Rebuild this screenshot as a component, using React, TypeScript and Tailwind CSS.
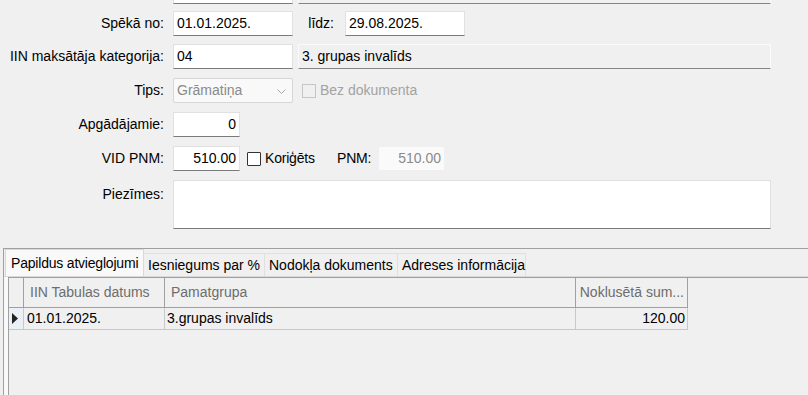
import React from "react";

function TextBox({ className = "", children, right = false }: { className?: string; children?: React.ReactNode; right?: boolean }) {
  return (
    <div
      className={`h-full bg-white border border-[#e1e1e1] border-b-[#7a7a7a] flex items-center px-[3px] ${right ? "justify-end" : ""} ${className}`}
    >
      {children}
    </div>
  );
}

function Label({ children, className = "" }: { children: React.ReactNode; className?: string }) {
  return <div className={`w-[164px] shrink-0 text-right whitespace-nowrap ${className}`}>{children}</div>;
}

export default function App() {
  return (
    <div className="w-[808px] h-[395px] overflow-hidden bg-[#f0f0f0] font-['Liberation_Sans',Arial,sans-serif] text-[14px] text-black flex flex-col">
      {/* row 0 (mostly scrolled out) */}
      <div className="flex h-[25px] -mt-[21px] shrink-0">
        <div className="w-[173px] shrink-0" />
        <TextBox className="w-[120px]" />
        <div className="w-[5px]" />
        <div className="w-[473px] h-full bg-[#f0f0f0] border border-[#fbfbfb] border-b-[#858585]" />
      </div>

      {/* Spēkā no */}
      <div className="flex h-[25px] mt-[7px] items-center shrink-0">
        <Label>Spēkā no:</Label>
        <div className="w-[9px]" />
        <TextBox className="w-[120px]">01.01.2025.</TextBox>
        <div className="w-[52px] text-right pr-[11px]">līdz:</div>
        <TextBox className="w-[120px]">29.08.2025.</TextBox>
      </div>

      {/* IIN */}
      <div className="flex h-[25px] mt-[8px] items-center shrink-0">
        <Label>IIN maksātāja kategorija:</Label>
        <div className="w-[9px]" />
        <TextBox className="w-[120px]">04</TextBox>
        <div className="w-[5px]" />
        <div className="w-[473px] h-full bg-[#f0f0f0] border border-[#fbfbfb] border-b-[#858585] flex items-center px-[3px]">
          3. grupas invalīds
        </div>
      </div>

      {/* Tips */}
      <div className="flex h-[25px] mt-[9px] items-center shrink-0">
        <Label>Tips:</Label>
        <div className="w-[9px]" />
        <div className="w-[120px] h-full bg-[#f9f9f9] border border-[#d6d6d6] rounded-[2px] flex items-center pl-[3px] pr-[6px] justify-between text-[#8a8a8a]">
          <span>Grāmatiņa</span>
          <svg width="9" height="6" viewBox="0 0 9 6" className="mt-[2px]">
            <path d="M0.5 0.5 L4.5 4.5 L8.5 0.5" fill="none" stroke="#a8a8a8" strokeWidth="1" />
          </svg>
        </div>
        <div className="w-[9px]" />
        <div className="w-[14px] h-[14px] border border-[#c6c6c6] bg-[#f0f0f0] shrink-0" />
        <div className="ml-[4px] text-[#a3a3a3]">Bez dokumenta</div>
      </div>

      {/* Apgādājamie */}
      <div className="flex h-[25px] mt-[9px] items-center shrink-0">
        <Label>Apgādājamie:</Label>
        <div className="w-[9px]" />
        <TextBox className="w-[67px]" right>0</TextBox>
      </div>

      {/* VID PNM */}
      <div className="flex h-[25px] mt-[9px] items-center shrink-0">
        <Label>VID PNM:</Label>
        <div className="w-[9px]" />
        <TextBox className="w-[67px]" right>510.00</TextBox>
        <div className="w-[7px]" />
        <div className="w-[14px] h-[14px] border border-[#333333] bg-white rounded-[1px] shrink-0" />
        <div className="ml-[4px] w-[49px] whitespace-nowrap tracking-[-0.2px]">Koriģēts</div>
        <div className="ml-[23px] w-[31px] whitespace-nowrap tracking-[-0.2px]">PNM:</div>
        <div className="ml-[10px] w-[67px] h-full bg-[#fafafa] border border-[#efefef] flex items-center justify-end px-[3px] text-[#8a8a8a]">
          510.00
        </div>
      </div>

      {/* Piezīmes */}
      <div className="flex h-[49px] mt-[9px] shrink-0">
        <Label className="pt-[4px]">Piezīmes:</Label>
        <div className="w-[9px]" />
        <div className="w-[598px] h-full bg-white border border-[#e1e1e1] border-b-[#7a7a7a]" />
      </div>

      {/* Tab area */}
      <div className="mt-[19px] ml-[3px] flex-1 border-t border-l border-[#a0a0a0] flex flex-col">
        <div className="flex items-end h-[27px] pl-[1px] shrink-0">
          <div className="w-[139px] h-[27px] bg-[#f9f9f9] border border-b-0 border-[#d9d9d9] flex items-center pl-[5px] whitespace-nowrap tracking-[-0.2px]">
            Papildus atvieglojumi
          </div>
          <div className="w-[121px] h-[23px] bg-[#f0f0f0] border border-b-0 border-l-0 border-[#e0e0e0] flex items-center pl-[4px] whitespace-nowrap">
            Iesniegums par %
          </div>
          <div className="w-[133px] h-[23px] bg-[#f0f0f0] border border-b-0 border-l-0 border-[#e0e0e0] flex items-center pl-[4px] whitespace-nowrap">
            Nodokļa dokuments
          </div>
          <div className="w-[128px] h-[23px] bg-[#f0f0f0] border border-b-0 border-l-0 border-[#e0e0e0] flex items-center pl-[4px] whitespace-nowrap">
            Adreses informācija
          </div>
        </div>
        <div className="flex-1 border-t border-[#d9d9d9] bg-[#f9f9f9] pl-[4px] flex flex-col">
          <div className="flex-1 border-l border-t border-[#a0a0a0] bg-[#f0f0f0] flex flex-col">
            {/* header */}
            <div className="flex h-[30px] shrink-0 text-[#6d6d6d]">
              <div className="w-[15px] border-r border-b border-[#a0a0a0]" />
              <div className="w-[141px] border-r border-b border-[#a0a0a0] flex items-center pl-[6px] whitespace-nowrap">IIN Tabulas datums</div>
              <div className="w-[411px] border-r border-b border-[#a0a0a0] flex items-center pl-[6px]">Pamatgrupa</div>
              <div className="w-[112px] border-r border-b border-[#a0a0a0] flex items-center justify-end pr-[3px] whitespace-nowrap">Noklusētā sum...</div>
            </div>
            {/* row */}
            <div className="flex h-[22px] shrink-0">
              <div className="w-[15px] border-r border-b border-[#c8c8c8] flex items-center pl-[3px] bg-[#eaf0f6]">
                <svg width="6" height="11" viewBox="0 0 6 11">
                  <path d="M0 0 L6 5.5 L0 11 Z" fill="#222" />
                </svg>
              </div>
              <div className="w-[141px] border-r border-b border-[#c8c8c8] flex items-center pl-[3px]">01.01.2025.</div>
              <div className="w-[411px] border-r border-b border-[#c8c8c8] flex items-center pl-[2px]">3.grupas invalīds</div>
              <div className="w-[112px] border-r border-b border-[#c8c8c8] flex items-center justify-end pr-[2px]">120.00</div>
            </div>
          </div>
        </div>
      </div>
    </div>
  );
}
